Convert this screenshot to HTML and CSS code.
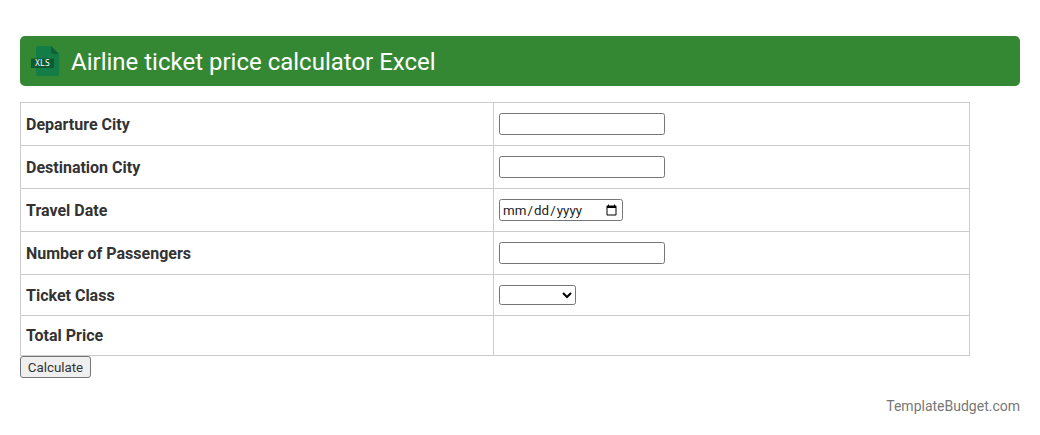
FILE: index.html
```html
<!DOCTYPE html>
<html lang="en">
<head>
<meta charset="utf-8">
<title>Airline ticket price calculator Excel</title>
<link rel="stylesheet" href="styles.css">
</head>
<body>
<header class="banner">
  <svg class="file-icon" width="40" height="30" viewBox="0 0 40 30" aria-hidden="true">
    <path d="M6 2.500a2.500 2.500 0 0 1 2.500-2.500h12.500l8 8v19.500a2.500 2.500 0 0 1-2.500 2.500h-18a2.500 2.500 0 0 1-2.500-2.500z" fill="#137c47"/>
    <path d="M21 0l8 8h-6a2 2 0 0 1-2-2z" fill="#0d6238"/>
    <rect x="1" y="12.500" width="23" height="9.500" fill="#0a5a32"/>
    <text x="12.500" y="20.200" class="file-label" text-anchor="middle">XLS</text>
  </svg>
  <h1 class="title">Airline ticket price calculator Excel</h1>
</header>
<form class="calc">
  <table class="grid">
    <tr class="row"><th>Departure City</th><td><input class="field" type="text"></td></tr>
    <tr class="row"><th>Destination City</th><td><input class="field" type="text"></td></tr>
    <tr class="row"><th>Travel Date</th><td><input class="date" type="date"></td></tr>
    <tr class="row"><th>Number of Passengers</th><td><input class="field" type="text"></td></tr>
    <tr class="row row-select"><th>Ticket Class</th><td><select class="choice"><option></option></select></td></tr>
    <tr class="row row-total"><th>Total Price</th><td></td></tr>
  </table>
  <button class="action" type="button">Calculate</button>
</form>
<footer class="credit">TemplateBudget.com</footer>
</body>
</html>
```
FILE: styles.css
```css
html, body {
  margin: 0;
  padding: 0;
}
body {
  background: #fff;
  color: #333;
  font-family: Roboto, "Liberation Sans", sans-serif;
  font-size: 16px;
  padding: 36px 20px 0;
}
.banner {
  display: flex;
  align-items: center;
  height: 50px;
  background: #348833;
  border-radius: 5px;
  padding-left: 10px;
  gap: 1px;
}
.file-icon {
  flex: none;
  margin-bottom: 1px;
}
.file-label {
  font-family: "DejaVu Sans Mono", monospace;
  font-size: 8px;
  letter-spacing: 0.2px;
  fill: #fff;
}
.title {
  margin: 2px 0 0;
  font-size: 24px;
  font-weight: 400;
  color: #fff;
  line-height: 1.2;
}
.calc {
  margin: 16px 0 0;
}
.grid {
  width: 950px;
  border-collapse: collapse;
  table-layout: fixed;
}
.grid th, .grid td {
  border: 1px solid #ccc;
  padding: 5px;
  text-align: left;
  line-height: 24px;
}
.grid th {
  width: 462px;
  font-weight: 700;
  font-size: 16px;
  padding-top: 6px;
  padding-bottom: 4px;
}
.grid td {
  font-size: 13.333px;
}
.row {
  height: 43px;
}
.row-select {
  height: 41px;
}
.row-total {
  height: 40px;
}
.row-total th {
  padding-top: 5px;
  padding-bottom: 5px;
}
.field, .date, .choice {
  box-sizing: border-box;
  display: block;
  height: 22px;
  font-family: Roboto, "Liberation Sans", sans-serif;
  font-size: 13.333px;
  border: 1px solid #767676;
  border-radius: 2.5px;
  background: #fff;
  color: #000;
  margin: 0;
}
.field {
  width: 166px;
  padding: 1px 2px;
}
.date {
  width: 124px;
  padding: 2px 2px 0;
  color: #222;
  letter-spacing: 0.05px;
}
.choice {
  width: 77px;
  height: 20px;
}
.action {
  display: block;
  box-sizing: border-box;
  width: 71px;
  height: 22px;
  padding: 1px 6px;
  font-family: Roboto, "Liberation Sans", sans-serif;
  font-size: 13.333px;
  color: #333;
  background: #efefef;
  border: 1px solid #767676;
  border-radius: 3px;
}
.credit {
  margin-top: 20px;
  text-align: right;
  font-size: 14px;
  line-height: 17px;
  color: #777;
}
```
